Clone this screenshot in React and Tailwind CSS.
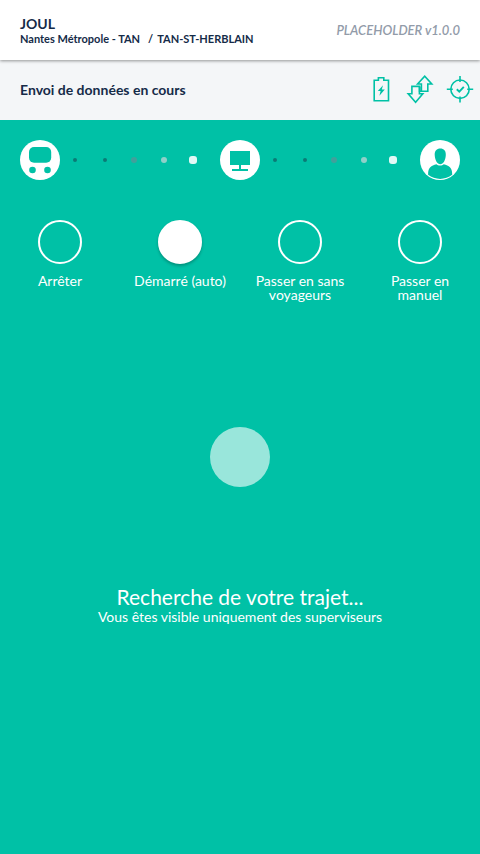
import { useState } from "react";

const DOTS = [
  "size-1 rounded-full bg-[#0b7b76]",
  "size-1 rounded-full bg-[#0b7b76]",
  "size-1.5 rounded-full bg-[#41a09b]",
  "size-1.5 rounded-full bg-[#8fd0c9]",
  "size-2 rounded-[3px] bg-[#e2f8f5]",
];

const MODES = [
  { id: "stop", label: "Arrêter" },
  { id: "auto", label: "Démarré (auto)" },
  { id: "empty", label: "Passer en sans voyageurs" },
  { id: "manual", label: "Passer en manuel" },
];

function Dots() {
  return (
    <div className="flex flex-1 items-center justify-between pr-[23px] pl-[11px]" aria-hidden="true">
      {DOTS.map((dot, i) => (
        <span key={i} className="flex size-2 items-center justify-center">
          <span className={dot} />
        </span>
      ))}
    </div>
  );
}

function BatteryIcon() {
  return (
    <svg viewBox="0 0 28 28" className="size-7" fill="none" stroke="#00c1a6" strokeWidth="1.6" role="img" aria-label="Batterie">
      <path d="M8.200 4.200h4.200V1.700h5.400v2.500h4.700v20.500H8.200z" />
      <path d="M17 9.200 11.800 15h2.800l-1.200 4.700L18.800 13.600h-3z" fill="#00c1a6" stroke="none" />
    </svg>
  );
}

function TransferIcon() {
  return (
    <svg viewBox="0 0 28 28" className="size-7 overflow-visible" fill="none" stroke="#00c1a6" strokeWidth="1.6" role="img" aria-label="Transfert de données">
      <path d="M13.600 10.500V15.200h8.200V8h4L18.700.1 11.600 8h3.800v7.200" />
      <path d="M13.400 10.400H5.900v7.400H2.200l7.400 8.400 7.200-8.400h-3.400z" />
    </svg>
  );
}

function GpsIcon() {
  return (
    <svg viewBox="0 0 28 28" className="size-7 overflow-visible" fill="none" stroke="#00c1a6" strokeWidth="1.6" role="img" aria-label="Localisation">
      <circle cx="14" cy="13.200" r="9.200" />
      <path d="M14 0v6M14 20.400v6M.8 13.200h6M21.200 13.200h6" />
      <path d="m10.800 13.200 2.500 2.400 4.500-4.800" strokeWidth="1.900" />
    </svg>
  );
}

function BusIcon() {
  return (
    <svg viewBox="0 0 40 40" className="size-10 shrink-0" role="img" aria-label="Véhicule">
      <circle cx="20" cy="20" r="20" fill="#fff" />
      <rect x="9" y="7" width="22.200" height="15.800" rx="5" fill="#00c1a6" />
      <circle cx="12.500" cy="30" r="3.300" fill="#00c1a6" />
      <circle cx="27.500" cy="30" r="3.300" fill="#00c1a6" />
    </svg>
  );
}

function ScreenIcon() {
  return (
    <svg viewBox="0 0 40 40" className="size-10 shrink-0" role="img" aria-label="Supervision">
      <circle cx="20" cy="20" r="20" fill="#fff" />
      <path d="M10 11h20v14h-9v4h7v2H12v-2h7v-4h-9z" fill="#00c1a6" />
    </svg>
  );
}

function UserIcon() {
  return (
    <svg viewBox="0 0 40 40" className="size-10 shrink-0" role="img" aria-label="Voyageur">
      <circle cx="20" cy="20" r="20" fill="#fff" />
      <path d="M20.300 8.400c3.500 0 5.800 2.300 5.500 6.500-.3 5.300-2.500 9.300-5.500 9.300s-5.300-4-5.600-9.300c-.2-4.200 2.100-6.500 5.600-6.500z" fill="#00c1a6" />
      <path d="M16.500 24.300c1.400 1.600 5.800 1.600 7.200 0 5.500 1.500 8.700 3.300 8.500 10.500-6.800 5.500-17.300 5.500-24.100 0-.1-7.200 2.900-9 8.400-10.500z" fill="#00c1a6" />
    </svg>
  );
}

export default function App() {
  const [mode, setMode] = useState("auto");

  return (
    <div className="flex min-h-screen flex-col bg-[#00c1a6] font-['Lato',sans-serif] text-sm text-white">
      <header className="z-10 flex h-15 items-center justify-between bg-white px-5 shadow-[0_1px_3px_rgba(0,0,0,0.4)]">
        <div className="pt-0.5 font-bold text-[#152b48]">
          <h1 className="text-sm leading-4">JOUL</h1>
          <p className="flex text-[11px] leading-[14px]">
            <span className="mr-2">Nantes Métropole - TAN</span>
            <span className="mr-1">/</span>
            <span>TAN-ST-HERBLAIN</span>
          </p>
        </div>
        <p className="text-[13px] font-semibold text-[#929ba9] italic">PLACEHOLDER v1.0.0</p>
      </header>

      <div className="flex h-15 items-center justify-between bg-[#f4f6f8] pr-1.5 pl-5">
        <p className="font-bold text-[#152b48]">Envoi de données en cours</p>
        <div className="flex gap-3">
          <BatteryIcon />
          <TransferIcon />
          <GpsIcon />
        </div>
      </div>

      <main className="flex flex-col pt-5">
        <div className="flex px-5">
          <BusIcon />
          <Dots />
          <ScreenIcon />
          <Dots />
          <UserIcon />
        </div>

        <fieldset aria-label="Mode de conduite" className="mt-10 grid grid-cols-4">
          {MODES.map(({ id, label }) => (
            <label key={id} htmlFor={id} className="flex cursor-pointer flex-col items-center gap-2.5 px-3 text-center leading-[14px]">
              <input
                id={id}
                type="radio"
                name="mode"
                checked={mode === id}
                onChange={() => setMode(id)}
                className="size-11 shrink-0 cursor-pointer appearance-none rounded-full border-2 border-white checked:bg-white checked:shadow-[0_2px_3px_rgba(0,0,0,0.25)]"
              />
              <span>{label}</span>
            </label>
          ))}
        </fieldset>

        <section className="mt-[125px] flex flex-col items-center text-center" aria-live="polite">
          <div className="size-15 rounded-full bg-white/60" />
          <h2 className="mt-[98px] text-[21px] leading-6">Recherche de votre trajet...</h2>
          <p className="leading-4">Vous êtes visible uniquement des superviseurs</p>
        </section>
      </main>
    </div>
  );
}
